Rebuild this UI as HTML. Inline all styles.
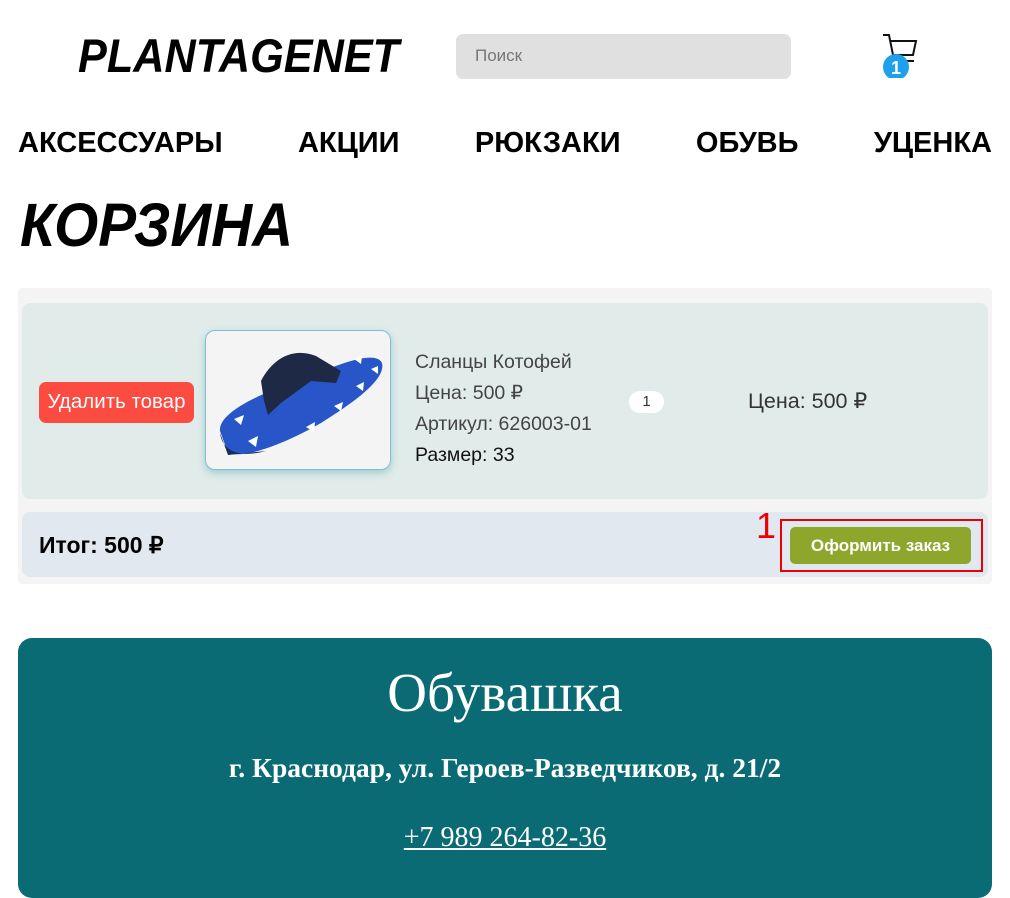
<!DOCTYPE html>
<html><head><meta charset="utf-8"><style>
*{box-sizing:border-box;margin:0;padding:0}
body{width:1010px;height:872px;overflow:hidden;background:#fff;font-family:"Liberation Sans",Arial,sans-serif;position:relative}
.abs{position:absolute}
.logo{left:78px;top:28px;font-size:47px;font-weight:bold;font-style:italic;color:#000;transform:scaleX(0.92);transform-origin:left}
.search{left:456px;top:34px;width:335px;height:45px;background:#e0e0e0;border-radius:7px;color:#777;font-size:17px;padding:12px 19px}
.nav{left:18px;top:127px;width:974px;display:flex;justify-content:space-between;font-size:29px;font-weight:bold;color:#000}
.title{left:20px;top:190px;font-size:61px;font-weight:bold;font-style:italic;transform:scaleX(0.93);transform-origin:left}
.panel{left:18px;top:288px;width:974px;height:296px;background:#f4f4f4;border-radius:4px}
.item{left:22px;top:303px;width:966px;height:196px;background:#e1ecea;border-radius:8px}
.del{left:39px;top:382px;width:155px;height:41px;background:#fc4b40;border-radius:7px;color:#fff;font-size:20.5px;text-align:center;line-height:40px}
.img{left:205px;top:330px;width:186px;height:140px;background:#f4f4f4;border:1px solid #7fc0cf;border-radius:10px;box-shadow:0 3px 8px rgba(80,160,180,.45)}
.info{left:415px;top:347px;font-size:19.5px;color:#444;line-height:31px}
.qty{left:629px;top:391px;width:35px;height:22px;background:#fff;border-radius:11px;font-size:15px;text-align:center;line-height:22px;color:#333}
.price{left:748px;top:389px;font-size:21.5px;color:#333}
.total{left:22px;top:512px;width:966px;height:65px;background:#e2e8ef;border-radius:8px}
.tt{left:39px;top:532px;font-size:23px;font-weight:bold}
.redbox{left:780px;top:519px;width:203px;height:53px;border:2px solid #e00}
.order{left:790px;top:527px;width:181px;height:37px;background:#8fa62c;border-radius:5px;color:#fff;font-weight:bold;font-size:17px;text-align:center;line-height:37px}
.one{left:756px;top:505px;color:#e00;font-size:36px;font-weight:300}
.footer{left:18px;top:638px;width:974px;height:260px;background:#0b6b75;border-radius:14px;color:#fff;text-align:center;font-family:"Liberation Serif",serif}
</style></head><body>
<div class="abs logo">PLANTAGENET</div>
<div class="abs search">Поиск</div>
<svg class="abs" style="left:880px;top:32px" width="40" height="46" viewBox="0 0 40 46">
<path d="M3 3h6l4 20h20l3-14H11" fill="none" stroke="#111" stroke-width="2"/>
<path d="M13 23l-1 6h22" fill="none" stroke="#111" stroke-width="2"/>
<circle cx="16" cy="35" r="13" fill="#1fa0ec"/>
<text x="16" y="42" font-size="18" font-weight="bold" fill="#fff" text-anchor="middle" font-family="Liberation Sans">1</text>
</svg>
<div class="abs nav"><span>АКСЕССУАРЫ</span><span>АКЦИИ</span><span>РЮКЗАКИ</span><span>ОБУВЬ</span><span>УЦЕНКА</span></div>
<div class="abs title">КОРЗИНА</div>
<div class="abs panel"></div>
<div class="abs item"></div>
<div class="abs del">Удалить товар</div>
<div class="abs img">
<svg width="186" height="140" viewBox="0 0 186 140">
<path d="M14 100 C12 80 60 60 105 45 C140 30 170 20 176 32 C180 48 150 70 115 92 C80 112 40 128 22 122 Z" fill="#2855c8"/>
<path d="M14 102 C16 118 30 128 60 120 L22 124 Z" fill="#1a2c5a"/>
<path d="M55 50 C65 30 85 15 110 25 L135 40 L130 52 L105 50 L75 72 L62 84 L58 70 Z" fill="#1e2a45"/>
<g fill="#fff"><path d="M28 88l10-4-3 10z"/><path d="M42 110l10-5-2 11z"/><path d="M100 96l9-5-1 10z"/><path d="M128 75l9-4-2 9z"/><path d="M150 55l8-4-1 9z"/><path d="M165 38l7-3v8z"/><path d="M148 28l8-3-1 8z"/></g>
</svg></div>
<div class="abs info">Сланцы Котофей<br>Цена: 500 ₽<br>Артикул: 626003-01<br><span style="color:#111">Размер: 33</span></div>
<div class="abs qty">1</div>
<div class="abs price">Цена: 500 ₽</div>
<div class="abs total"></div>
<div class="abs tt">Итог: 500 ₽</div>
<div class="abs one">1</div>
<div class="abs redbox"></div>
<div class="abs order">Оформить заказ</div>
<div class="abs footer">
<div style="font-size:55px;margin-top:22px;line-height:66px">Обувашка</div>
<div style="font-size:27.5px;font-weight:bold;margin-top:26px">г. Краснодар, ул. Героев-Разведчиков, д. 21/2</div>
<div style="font-size:28px;margin-top:38px;text-decoration:underline">+7 989 264-82-36</div>
</div>
</body></html>
